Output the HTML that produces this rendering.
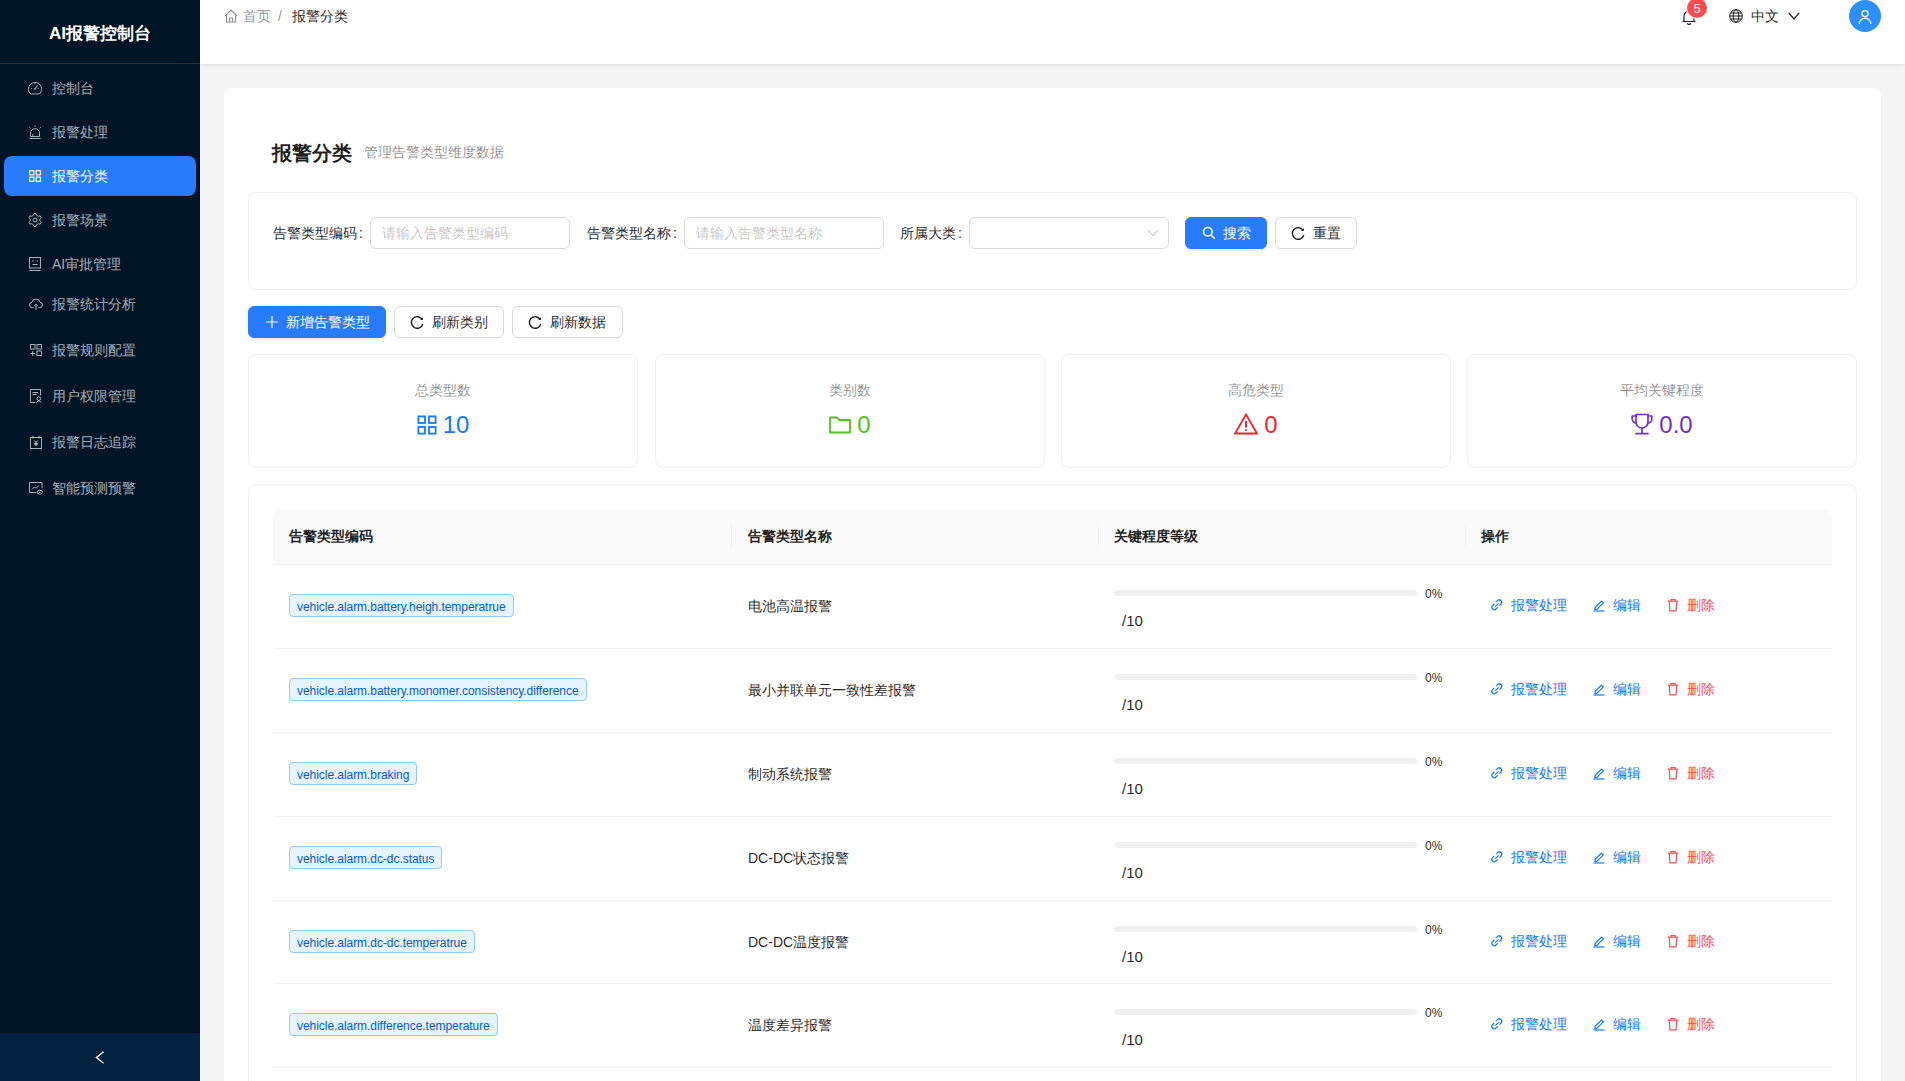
<!DOCTYPE html>
<html><head><meta charset="utf-8"><style>
*{box-sizing:border-box;margin:0;padding:0}
html,body{width:1905px;height:1081px;overflow:hidden}
body{font-family:"Liberation Sans",sans-serif;font-size:14px;color:rgba(0,0,0,.88);background:#f5f5f5;position:relative}
.abs{position:absolute}
#sider{left:0;top:0;width:200px;height:1081px;background:#021527}
#logo{left:0;top:0;width:200px;height:64px;color:#fff;font-weight:bold;font-size:17px;text-align:center;line-height:68px;border-bottom:1px solid #2e2f31}
.mi{position:absolute;left:4px;width:192px;height:40px;border-radius:8px;color:rgba(255,255,255,.65);line-height:40px;white-space:nowrap}
.mi .ic{position:absolute;left:24px;top:13px;width:14px;height:14px}
.mi .tx{position:absolute;left:48px;top:0}
.mi.sel{background:#287bfa;color:#fff}
#trigger{left:0;top:1033px;width:200px;height:48px;background:#02213f}
#header{left:200px;top:0;width:1705px;height:64px;background:#fff;box-shadow:0 1px 4px rgba(0,21,41,.1);z-index:2}
.card{position:absolute;background:#fff;border-radius:8px}
.bd{border:1px solid #f0f0f0}
.t{position:absolute;white-space:nowrap;line-height:20px}
.inp{position:absolute;height:32px;border:1px solid #d9d9d9;border-radius:6px;background:#fff;color:rgba(0,0,0,.25);padding-left:11px;line-height:30px;white-space:nowrap}
.btn{position:absolute;height:32px;border-radius:6px;line-height:30px;border:1px solid #d9d9d9;background:#fff;color:rgba(0,0,0,.88);white-space:nowrap;box-shadow:0 2px 0 rgba(0,0,0,.02)}
.btn.pri{background:#287bfa;border-color:#287bfa;color:#fff;box-shadow:0 2px 0 rgba(5,145,255,.1)}
.btn svg{position:absolute}
.btn span{position:absolute;top:0}
.stat{position:absolute;top:354px;width:390px;height:114px;border:1px solid #f0f0f0;border-radius:8px;background:#fff}
.stat .lb{position:absolute;left:0;width:100%;top:25px;text-align:center;color:rgba(0,0,0,.45);line-height:20px}
.stat .val{position:absolute;left:0;width:100%;top:56px;text-align:center;font-size:24px;line-height:28px;white-space:nowrap}
.stat .val svg{vertical-align:-2px;margin-right:6px}
.th{position:absolute;top:0;height:55px;line-height:55px;font-weight:bold;white-space:nowrap}
.sep{position:absolute;top:16px;width:1px;height:22px;background:#f0f0f0}
.row{position:absolute;left:0;width:1559px;border-bottom:1px solid #f0f0f0}
.tag{position:absolute;left:16px;height:23px;line-height:22px;font-size:12px;padding:1px 7px 0;border:1px solid #91caff;background:#e6f4ff;color:#0958d9;border-radius:4px;white-space:nowrap;letter-spacing:-0.05px}
.act{position:absolute;white-space:nowrap;line-height:20px}
.act svg{position:absolute}
</style></head><body>
<div id="sider" class="abs"><div id="logo" class="abs">AI报警控制台</div>
<div class="mi" style="top:68px"><svg class="ic" viewBox="0 0 14 14" fill="none" stroke="currentColor" stroke-width="1"><path d="M2.6 13A6.6 6.6 0 1 1 11.4 13Z" stroke-linejoin="round"/><path d="M7 7.6L9.2 5.2" stroke-width="1.1"/><circle cx="7" cy="7.8" r="0.9" fill="currentColor" stroke="none"/><path d="M3.3 7.4h.9M9.8 7.4h.9M7 2.3v.9M4.1 4.3l.6.6M9.9 4.3l-.6.6"/></svg><span class="tx">控制台</span></div>
<div class="mi" style="top:112px"><svg class="ic" viewBox="0 0 14 14" fill="none" stroke="currentColor" stroke-width="1"><path d="M2.5 11.5V8.2a4.5 4.5 0 0 1 9 0v3.3Z"/><path d="M1.5 13.5h11"/><path d="M4.8 11V9" /><path d="M7 0.3v1.4M1.3 2.2l1 1M12.7 2.2l-1 1"/></svg><span class="tx">报警处理</span></div>
<div class="mi sel" style="top:156px"><svg class="ic" viewBox="0 0 14 14" fill="none" stroke="currentColor" stroke-width="1.2"><rect x="1.6" y="1.6" width="4.3" height="4.3" rx=".3"/><rect x="8.1" y="1.6" width="4.3" height="4.3" rx=".3"/><rect x="1.6" y="8.1" width="4.3" height="4.3" rx=".3"/><rect x="8.1" y="8.1" width="4.3" height="4.3" rx=".3"/></svg><span class="tx">报警分类</span></div>
<div class="mi" style="top:200px"><svg class="ic" viewBox="0 0 14 14" fill="none" stroke="currentColor" stroke-width="1" stroke-linejoin="round"><path d="M5.54 2.22 L5.97 0.48 L8.03 0.48 L8.46 2.22 L10.41 3.34 L12.13 2.85 L13.16 4.63 L11.87 5.88 L11.87 8.12 L13.16 9.37 L12.13 11.15 L10.41 10.66 L8.46 11.78 L8.03 13.52 L5.97 13.52 L5.54 11.78 L3.59 10.66 L1.87 11.15 L0.84 9.37 L2.13 8.12 L2.13 5.88 L0.84 4.63 L1.87 2.85 L3.59 3.34Z"/><circle cx="7" cy="7" r="2"/></svg><span class="tx">报警场景</span></div>
<div class="mi" style="top:244px"><svg class="ic" viewBox="0 0 14 14" fill="none" stroke="currentColor" stroke-width="1"><rect x="1.5" y="0.5" width="11" height="10.5"/><path d="M1.5 13.5h11"/><circle cx="4.8" cy="4" r=".7" fill="currentColor" stroke="none"/><circle cx="9.2" cy="4" r=".7" fill="currentColor" stroke="none"/><path d="M4.5 7.5h5"/></svg><span class="tx">AI审批管理</span></div>
<div class="mi" style="top:284px"><svg class="ic" style="left:25px" viewBox="0 0 14 14" fill="none" stroke="currentColor" stroke-width="1"><path d="M4.6 10.6H3.4A2.7 2.7 0 0 1 3 5.2 4.1 4.1 0 0 1 11 5.2a2.7 2.7 0 0 1-.4 5.4H9.4"/><path d="M7 13V7.5M5.3 9.1L7 7.4l1.7 1.7"/></svg><span class="tx">报警统计分析</span></div>
<div class="mi" style="top:330px"><svg class="ic" style="left:25px" viewBox="0 0 14 14" fill="none" stroke="currentColor" stroke-width="1"><rect x="1.5" y="1.5" width="4.5" height="4.5"/><rect x="8" y="1.5" width="4.5" height="4.5"/><rect x="8" y="8" width="4.5" height="4.5"/><path d="M3.75 8v5M1.25 10.5h5"/></svg><span class="tx">报警规则配置</span></div>
<div class="mi" style="top:376px"><svg class="ic" style="left:25px" viewBox="0 0 14 14" fill="none" stroke="currentColor" stroke-width="1"><path d="M6.5 13.5h-5v-13h10v6"/><path d="M3.5 3.5h5.5M3.5 5.5h4"/><circle cx="9.8" cy="9.6" r="1.9"/><path d="M7.4 13.6a2.6 2.6 0 0 1 4.8 0"/></svg><span class="tx">用户权限管理</span></div>
<div class="mi" style="top:422px"><svg class="ic" style="left:25px" viewBox="0 0 14 14" fill="none" stroke="currentColor" stroke-width="1"><rect x="1.5" y="2.5" width="11" height="11"/><path d="M4 0.8V3.5M10 0.8V3.5"/><path d="M5.3 5.5l1.7 2L8.7 5.5M7 7.5v3.6M5.3 8.5h3.4M5.3 9.8h3.4"/></svg><span class="tx">报警日志追踪</span></div>
<div class="mi" style="top:468px"><svg class="ic" style="left:25px" viewBox="0 0 14 14" fill="none" stroke="currentColor" stroke-width="1"><path d="M7 11.5H0.5v-10h12.5v5.5"/><path d="M3 8.5l2.5-2.6 1.5 1.5 2.8-2.9"/><ellipse cx="10.8" cy="11.2" rx="2.6" ry="2"/><circle cx="10.8" cy="11.2" r=".7" fill="currentColor" stroke="none"/></svg><span class="tx">智能预测预警</span></div>
</div>
<div id="trigger" class="abs"><svg style="position:absolute;left:95px;top:18px" width="10" height="13" viewBox="0 0 10 13" fill="none" stroke="#fff" stroke-width="1.3"><path d="M8.6 0.8L1.4 6.5l7.2 5.7"/></svg></div>
<div id="header" class="abs"><svg style="position:absolute;left:24px;top:9px" width="14" height="14" viewBox="0 0 14 14" fill="none" stroke="rgba(0,0,0,.45)" stroke-width="1.1"><path d="M1 7L7 1l6 6M2.5 5.5V13h9V5.5M5.5 13V9h3v4"/></svg><span class="t" style="left:43px;top:6px;color:rgba(0,0,0,.45)">首页</span><span class="t" style="left:78px;top:6px;color:rgba(0,0,0,.45)">/</span><span class="t" style="left:92px;top:6px;color:rgba(0,0,0,.88)">报警分类</span><svg style="position:absolute;left:1481px;top:9px" width="16" height="16" viewBox="0 0 16 16" fill="none" stroke="rgba(0,0,0,.88)" stroke-width="1.2"><path d="M3 12.5V7a5 5 0 0 1 10 0v5.5M1.5 12.5h13M6.3 14.3a1.8 1.8 0 0 0 3.4 0M8 1v1"/></svg><div style="position:absolute;left:1487px;top:-2px;width:20px;height:20px;border-radius:10px;background:#ff4d4f;color:#fff;font-size:12px;line-height:22px;text-align:center;box-shadow:0 0 0 1px #fff">5</div><svg style="position:absolute;left:1529px;top:9px" width="14" height="14" viewBox="0 0 14 14" fill="none" stroke="rgba(0,0,0,.88)" stroke-width="1"><circle cx="7" cy="7" r="6.3"/><ellipse cx="7" cy="7" rx="2.8" ry="6.3"/><path d="M.7 7h12.6M1.6 4h10.8M1.6 10h10.8"/></svg><span class="t" style="left:1551px;top:6px">中文</span><svg style="position:absolute;left:1588px;top:12px" width="12" height="8" viewBox="0 0 12 8" fill="none" stroke="rgba(0,0,0,.88)" stroke-width="1.3"><path d="M.8 .8L6 7 11.2 .8"/></svg><div style="position:absolute;left:1649px;top:0;width:32px;height:32px;border-radius:16px;background:#2b8ffc"><svg style="position:absolute;left:9px;top:10px" width="14" height="15" viewBox="0 0 14 15" fill="none" stroke="#fff" stroke-width="1.3"><circle cx="7" cy="3.6" r="3.1"/><path d="M1.2 14a5.8 5.8 0 0 1 11.6 0"/></svg></div></div>
<div class="card" style="left:224px;top:88px;width:1657px;height:1100px"></div>
<span class="t" style="left:272px;top:142px;font-size:20px;line-height:22px;font-weight:bold">报警分类</span><span class="t" style="left:364px;top:142px;color:rgba(0,0,0,.45)">管理告警类型维度数据</span>
<div class="card bd" style="left:248px;top:192px;width:1609px;height:98px"></div><span class="t" style="left:273px;top:223px">告警类型编码<span style="margin-left:2px">:</span></span><div class="inp" style="left:370px;top:217px;width:200px">请输入告警类型编码</div><span class="t" style="left:587px;top:223px">告警类型名称<span style="margin-left:2px">:</span></span><div class="inp" style="left:684px;top:217px;width:200px">请输入告警类型名称</div><span class="t" style="left:900px;top:223px">所属大类<span style="margin-left:2px">:</span></span><div class="inp" style="left:969px;top:217px;width:200px"><svg style="position:absolute;left:177px;top:11px" width="12" height="8" viewBox="0 0 12 8" fill="none" stroke="rgba(0,0,0,.25)" stroke-width="1.1"><path d="M1 1l5 5.5L11 1"/></svg></div><div class="btn pri" style="left:1185px;top:217px;width:82px"><svg style="left:16px;top:8px" width="14" height="14" viewBox="0 0 14 14" fill="none" stroke="#fff" stroke-width="1.5"><circle cx="5.8" cy="5.8" r="4.3"/><path d="M9 9l3.8 3.8"/></svg><span style="left:37px">搜索</span></div><div class="btn" style="left:1275px;top:217px;width:82px"><svg style="left:15px;top:8px" width="14" height="14" viewBox="0 0 14 14" fill="none" stroke="rgba(0,0,0,.88)" stroke-width="1.4"><path d="M12 4.2A5.8 5.8 0 1 0 12.8 9"/><path d="M12.9 2.3V5H10.2Z" fill="rgba(0,0,0,.88)" stroke="none"/></svg><span style="left:37px">重置</span></div>
<div class="btn pri" style="left:248px;top:306px;width:138px"><svg style="left:16px;top:8px" width="14" height="14" viewBox="0 0 14 14" fill="none" stroke="#fff" stroke-width="1.2"><path d="M7 1v12M1 7h12"/></svg><span style="left:37px">新增告警类型</span></div><div class="btn" style="left:394px;top:306px;width:110px"><svg style="left:15px;top:8px" width="14" height="14" viewBox="0 0 14 14" fill="none" stroke="rgba(0,0,0,.88)" stroke-width="1.4"><path d="M12 4.2A5.8 5.8 0 1 0 12.8 9"/><path d="M12.9 2.3V5H10.2Z" fill="rgba(0,0,0,.88)" stroke="none"/></svg><span style="left:37px">刷新类别</span></div><div class="btn" style="left:512px;top:306px;width:111px"><svg style="left:15px;top:8px" width="14" height="14" viewBox="0 0 14 14" fill="none" stroke="rgba(0,0,0,.88)" stroke-width="1.4"><path d="M12 4.2A5.8 5.8 0 1 0 12.8 9"/><path d="M12.9 2.3V5H10.2Z" fill="rgba(0,0,0,.88)" stroke="none"/></svg><span style="left:37px">刷新数据</span></div>
<div class="stat" style="left:248px"><div class="lb">总类型数</div><div class="val" style="color:#1677ff"><svg width="20" height="20" viewBox="0 0 20 20" fill="none" stroke="#1677ff" stroke-width="1.8"><rect x="1.4" y="1.4" width="6.6" height="6.6"/><rect x="12" y="1.4" width="6.6" height="6.6"/><rect x="1.4" y="12" width="6.6" height="6.6"/><rect x="12" y="12" width="6.6" height="6.6"/></svg>10</div></div>
<div class="stat" style="left:655px"><div class="lb">类别数</div><div class="val" style="color:#52c41a"><svg width="22" height="20" viewBox="0 0 22 20" fill="none" stroke="#52c41a" stroke-width="1.8" stroke-linejoin="round"><path d="M1 2.5h7l2 2.5h11v12.5H1Z"/></svg>0</div></div>
<div class="stat" style="left:1061px"><div class="lb">高危类型</div><div class="val" style="color:#f5222d"><svg width="24" height="22" viewBox="0 0 24 22" fill="none" stroke="#f5222d" stroke-width="1.8"><path d="M12 1.5L23 20.5H1Z"/><path d="M12 8v6.5" stroke-width="2"/><circle cx="12" cy="17" r="1.1" fill="#f5222d" stroke="none"/></svg>0</div></div>
<div class="stat" style="left:1467px"><div class="lb">平均关键程度</div><div class="val" style="color:#722ed1"><svg width="22" height="22" viewBox="0 0 22 22" fill="none" stroke="#722ed1" stroke-width="1.7" stroke-linejoin="round" stroke-linecap="round"><path d="M5 1.5h12v7.5a6 6 0 0 1-12 0Z"/><path d="M5 3H1.2v3a4 4 0 0 0 4 4M17 3h3.8v3a4 4 0 0 1-4 4M11 15v5.3M5 20.6h12"/></svg>0.0</div></div>
<div class="card bd" style="left:248px;top:484px;width:1609px;height:700px"></div>
<div class="abs" style="left:273px;top:509px;width:1559px;height:600px"><div class="abs" style="left:0;top:0;width:1559px;height:56px;background:#fafafa;border-radius:8px 8px 0 0;border-bottom:1px solid #f0f0f0"></div><span class="th" style="left:16px">告警类型编码</span><div class="sep" style="left:458px"></div><span class="th" style="left:475px">告警类型名称</span><div class="sep" style="left:825px"></div><span class="th" style="left:841px">关键程度等级</span><div class="sep" style="left:1192px"></div><span class="th" style="left:1208px">操作</span><div class="row" style="top:56.0px;height:84px"><span class="tag" style="top:29px">vehicle.alarm.battery.heigh.temperatrue</span><span class="t" style="left:475px;top:31px">电池高温报警</span><div class="abs" style="left:841px;top:25px;width:303px;height:6px;border-radius:3px;background:rgba(0,0,0,.06)"></div><span class="t" style="left:1152px;top:19px;font-size:12px">0%</span><span class="t" style="left:849px;top:46px;font-size:15px">/10</span><span class="act" style="left:1217px;top:30px;color:#1677ff"><svg style="left:0;top:3px" width="14" height="14" viewBox="0 0 14 14" fill="none" stroke="#1677ff" stroke-width="1.2"><path d="M6 4.2l1.6-1.6a2.4 2.4 0 0 1 3.4 3.4L9.4 7.6M7.6 9.4L6 11a2.4 2.4 0 0 1-3.4-3.4L4.2 6M5.3 8.7l3.4-3.4"/></svg><span style="position:absolute;left:21px">报警处理</span></span><span class="act" style="left:1319px;top:30px;color:#1677ff"><svg style="left:0;top:3px" width="14" height="14" viewBox="0 0 14 14" fill="none" stroke="#1677ff" stroke-width="1.2"><path d="M3 9.5L9.5 3l1.8 1.8L4.8 11.3H3Z"/><path d="M1.5 13h11"/></svg><span style="position:absolute;left:21px">编辑</span></span><span class="act" style="left:1393px;top:30px;color:#ff4d4f"><svg style="left:0;top:3px" width="14" height="14" viewBox="0 0 14 14" fill="none" stroke="#ff4d4f" stroke-width="1.2"><path d="M1.8 3.2h10.4M5 3V1.5h4V3M3.2 3.5l.7 9.3h6.2l.7-9.3"/></svg><span style="position:absolute;left:21px">删除</span></span></div>
<div class="row" style="top:140.0px;height:83.85px"><span class="tag" style="top:29px">vehicle.alarm.battery.monomer.consistency.difference</span><span class="t" style="left:475px;top:31px">最小并联单元一致性差报警</span><div class="abs" style="left:841px;top:25px;width:303px;height:6px;border-radius:3px;background:rgba(0,0,0,.06)"></div><span class="t" style="left:1152px;top:19px;font-size:12px">0%</span><span class="t" style="left:849px;top:46px;font-size:15px">/10</span><span class="act" style="left:1217px;top:30px;color:#1677ff"><svg style="left:0;top:3px" width="14" height="14" viewBox="0 0 14 14" fill="none" stroke="#1677ff" stroke-width="1.2"><path d="M6 4.2l1.6-1.6a2.4 2.4 0 0 1 3.4 3.4L9.4 7.6M7.6 9.4L6 11a2.4 2.4 0 0 1-3.4-3.4L4.2 6M5.3 8.7l3.4-3.4"/></svg><span style="position:absolute;left:21px">报警处理</span></span><span class="act" style="left:1319px;top:30px;color:#1677ff"><svg style="left:0;top:3px" width="14" height="14" viewBox="0 0 14 14" fill="none" stroke="#1677ff" stroke-width="1.2"><path d="M3 9.5L9.5 3l1.8 1.8L4.8 11.3H3Z"/><path d="M1.5 13h11"/></svg><span style="position:absolute;left:21px">编辑</span></span><span class="act" style="left:1393px;top:30px;color:#ff4d4f"><svg style="left:0;top:3px" width="14" height="14" viewBox="0 0 14 14" fill="none" stroke="#ff4d4f" stroke-width="1.2"><path d="M1.8 3.2h10.4M5 3V1.5h4V3M3.2 3.5l.7 9.3h6.2l.7-9.3"/></svg><span style="position:absolute;left:21px">删除</span></span></div>
<div class="row" style="top:223.85px;height:83.85px"><span class="tag" style="top:29px">vehicle.alarm.braking</span><span class="t" style="left:475px;top:31px">制动系统报警</span><div class="abs" style="left:841px;top:25px;width:303px;height:6px;border-radius:3px;background:rgba(0,0,0,.06)"></div><span class="t" style="left:1152px;top:19px;font-size:12px">0%</span><span class="t" style="left:849px;top:46px;font-size:15px">/10</span><span class="act" style="left:1217px;top:30px;color:#1677ff"><svg style="left:0;top:3px" width="14" height="14" viewBox="0 0 14 14" fill="none" stroke="#1677ff" stroke-width="1.2"><path d="M6 4.2l1.6-1.6a2.4 2.4 0 0 1 3.4 3.4L9.4 7.6M7.6 9.4L6 11a2.4 2.4 0 0 1-3.4-3.4L4.2 6M5.3 8.7l3.4-3.4"/></svg><span style="position:absolute;left:21px">报警处理</span></span><span class="act" style="left:1319px;top:30px;color:#1677ff"><svg style="left:0;top:3px" width="14" height="14" viewBox="0 0 14 14" fill="none" stroke="#1677ff" stroke-width="1.2"><path d="M3 9.5L9.5 3l1.8 1.8L4.8 11.3H3Z"/><path d="M1.5 13h11"/></svg><span style="position:absolute;left:21px">编辑</span></span><span class="act" style="left:1393px;top:30px;color:#ff4d4f"><svg style="left:0;top:3px" width="14" height="14" viewBox="0 0 14 14" fill="none" stroke="#ff4d4f" stroke-width="1.2"><path d="M1.8 3.2h10.4M5 3V1.5h4V3M3.2 3.5l.7 9.3h6.2l.7-9.3"/></svg><span style="position:absolute;left:21px">删除</span></span></div>
<div class="row" style="top:307.7px;height:83.85px"><span class="tag" style="top:29px">vehicle.alarm.dc-dc.status</span><span class="t" style="left:475px;top:31px">DC-DC状态报警</span><div class="abs" style="left:841px;top:25px;width:303px;height:6px;border-radius:3px;background:rgba(0,0,0,.06)"></div><span class="t" style="left:1152px;top:19px;font-size:12px">0%</span><span class="t" style="left:849px;top:46px;font-size:15px">/10</span><span class="act" style="left:1217px;top:30px;color:#1677ff"><svg style="left:0;top:3px" width="14" height="14" viewBox="0 0 14 14" fill="none" stroke="#1677ff" stroke-width="1.2"><path d="M6 4.2l1.6-1.6a2.4 2.4 0 0 1 3.4 3.4L9.4 7.6M7.6 9.4L6 11a2.4 2.4 0 0 1-3.4-3.4L4.2 6M5.3 8.7l3.4-3.4"/></svg><span style="position:absolute;left:21px">报警处理</span></span><span class="act" style="left:1319px;top:30px;color:#1677ff"><svg style="left:0;top:3px" width="14" height="14" viewBox="0 0 14 14" fill="none" stroke="#1677ff" stroke-width="1.2"><path d="M3 9.5L9.5 3l1.8 1.8L4.8 11.3H3Z"/><path d="M1.5 13h11"/></svg><span style="position:absolute;left:21px">编辑</span></span><span class="act" style="left:1393px;top:30px;color:#ff4d4f"><svg style="left:0;top:3px" width="14" height="14" viewBox="0 0 14 14" fill="none" stroke="#ff4d4f" stroke-width="1.2"><path d="M1.8 3.2h10.4M5 3V1.5h4V3M3.2 3.5l.7 9.3h6.2l.7-9.3"/></svg><span style="position:absolute;left:21px">删除</span></span></div>
<div class="row" style="top:391.54999999999995px;height:83.85px"><span class="tag" style="top:29px">vehicle.alarm.dc-dc.temperatrue</span><span class="t" style="left:475px;top:31px">DC-DC温度报警</span><div class="abs" style="left:841px;top:25px;width:303px;height:6px;border-radius:3px;background:rgba(0,0,0,.06)"></div><span class="t" style="left:1152px;top:19px;font-size:12px">0%</span><span class="t" style="left:849px;top:46px;font-size:15px">/10</span><span class="act" style="left:1217px;top:30px;color:#1677ff"><svg style="left:0;top:3px" width="14" height="14" viewBox="0 0 14 14" fill="none" stroke="#1677ff" stroke-width="1.2"><path d="M6 4.2l1.6-1.6a2.4 2.4 0 0 1 3.4 3.4L9.4 7.6M7.6 9.4L6 11a2.4 2.4 0 0 1-3.4-3.4L4.2 6M5.3 8.7l3.4-3.4"/></svg><span style="position:absolute;left:21px">报警处理</span></span><span class="act" style="left:1319px;top:30px;color:#1677ff"><svg style="left:0;top:3px" width="14" height="14" viewBox="0 0 14 14" fill="none" stroke="#1677ff" stroke-width="1.2"><path d="M3 9.5L9.5 3l1.8 1.8L4.8 11.3H3Z"/><path d="M1.5 13h11"/></svg><span style="position:absolute;left:21px">编辑</span></span><span class="act" style="left:1393px;top:30px;color:#ff4d4f"><svg style="left:0;top:3px" width="14" height="14" viewBox="0 0 14 14" fill="none" stroke="#ff4d4f" stroke-width="1.2"><path d="M1.8 3.2h10.4M5 3V1.5h4V3M3.2 3.5l.7 9.3h6.2l.7-9.3"/></svg><span style="position:absolute;left:21px">删除</span></span></div>
<div class="row" style="top:475.4px;height:83.85px"><span class="tag" style="top:29px">vehicle.alarm.difference.temperature</span><span class="t" style="left:475px;top:31px">温度差异报警</span><div class="abs" style="left:841px;top:25px;width:303px;height:6px;border-radius:3px;background:rgba(0,0,0,.06)"></div><span class="t" style="left:1152px;top:19px;font-size:12px">0%</span><span class="t" style="left:849px;top:46px;font-size:15px">/10</span><span class="act" style="left:1217px;top:30px;color:#1677ff"><svg style="left:0;top:3px" width="14" height="14" viewBox="0 0 14 14" fill="none" stroke="#1677ff" stroke-width="1.2"><path d="M6 4.2l1.6-1.6a2.4 2.4 0 0 1 3.4 3.4L9.4 7.6M7.6 9.4L6 11a2.4 2.4 0 0 1-3.4-3.4L4.2 6M5.3 8.7l3.4-3.4"/></svg><span style="position:absolute;left:21px">报警处理</span></span><span class="act" style="left:1319px;top:30px;color:#1677ff"><svg style="left:0;top:3px" width="14" height="14" viewBox="0 0 14 14" fill="none" stroke="#1677ff" stroke-width="1.2"><path d="M3 9.5L9.5 3l1.8 1.8L4.8 11.3H3Z"/><path d="M1.5 13h11"/></svg><span style="position:absolute;left:21px">编辑</span></span><span class="act" style="left:1393px;top:30px;color:#ff4d4f"><svg style="left:0;top:3px" width="14" height="14" viewBox="0 0 14 14" fill="none" stroke="#ff4d4f" stroke-width="1.2"><path d="M1.8 3.2h10.4M5 3V1.5h4V3M3.2 3.5l.7 9.3h6.2l.7-9.3"/></svg><span style="position:absolute;left:21px">删除</span></span></div>
<div class="row" style="top:559.25px;height:83.85px"><span class="tag" style="top:29px">vehicle.alarm.x</span><span class="t" style="left:475px;top:31px">x</span><div class="abs" style="left:841px;top:25px;width:303px;height:6px;border-radius:3px;background:rgba(0,0,0,.06)"></div><span class="t" style="left:1152px;top:19px;font-size:12px">0%</span><span class="t" style="left:849px;top:46px;font-size:15px">/10</span><span class="act" style="left:1217px;top:30px;color:#1677ff"><svg style="left:0;top:3px" width="14" height="14" viewBox="0 0 14 14" fill="none" stroke="#1677ff" stroke-width="1.2"><path d="M6 4.2l1.6-1.6a2.4 2.4 0 0 1 3.4 3.4L9.4 7.6M7.6 9.4L6 11a2.4 2.4 0 0 1-3.4-3.4L4.2 6M5.3 8.7l3.4-3.4"/></svg><span style="position:absolute;left:21px">报警处理</span></span><span class="act" style="left:1319px;top:30px;color:#1677ff"><svg style="left:0;top:3px" width="14" height="14" viewBox="0 0 14 14" fill="none" stroke="#1677ff" stroke-width="1.2"><path d="M3 9.5L9.5 3l1.8 1.8L4.8 11.3H3Z"/><path d="M1.5 13h11"/></svg><span style="position:absolute;left:21px">编辑</span></span><span class="act" style="left:1393px;top:30px;color:#ff4d4f"><svg style="left:0;top:3px" width="14" height="14" viewBox="0 0 14 14" fill="none" stroke="#ff4d4f" stroke-width="1.2"><path d="M1.8 3.2h10.4M5 3V1.5h4V3M3.2 3.5l.7 9.3h6.2l.7-9.3"/></svg><span style="position:absolute;left:21px">删除</span></span></div>
</div>
</body></html>
